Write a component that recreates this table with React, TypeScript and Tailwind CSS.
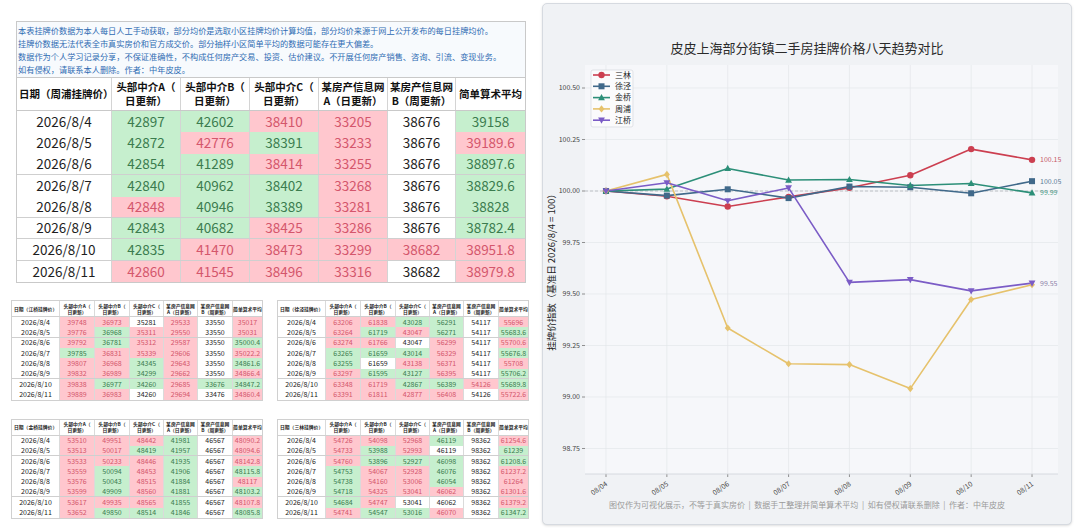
import React from 'react';

type Cell = [string, 'g' | 'r' | 'w'];
type Row = { date: string; cells: Cell[] };

const parse = (src: string): Row[] =>
  src
    .trim()
    .split('\n')
    .map((line) => {
      const [date, ...rest] = line.trim().split(/\s+/);
      return {
        date,
        cells: rest.map((t) => {
          const [v, c] = t.split(':');
          return [v, c as 'g' | 'r' | 'w'];
        }),
      };
    });

const zhoupu = parse(`
2026/8/4 42897:g 42602:g 38410:r 33205:r 38676:w 39158:g
2026/8/5 42872:g 42776:r 38391:g 33233:r 38676:w 39189.6:r
2026/8/6 42854:g 41289:g 38414:r 33255:r 38676:w 38897.6:g
2026/8/7 42840:g 40962:g 38402:g 33268:r 38676:w 38829.6:g
2026/8/8 42848:r 40946:g 38389:g 33281:r 38676:w 38828:g
2026/8/9 42843:g 40682:g 38425:r 33286:r 38676:w 38782.4:g
2026/8/10 42835:g 41470:r 38473:r 33299:r 38682:r 38951.8:r
2026/8/11 42860:r 41545:r 38496:r 33316:r 38682:w 38979.8:r
`);

const jiangqiao = parse(`
2026/8/4 39748:r 36973:r 35281:w 29533:r 33550:w 35017:r
2026/8/5 39776:r 36968:g 35311:r 29550:r 33550:w 35031:r
2026/8/6 39792:r 36781:g 35312:r 29587:r 33550:w 35000.4:g
2026/8/7 39785:g 36831:r 35339:r 29606:r 33550:w 35022.2:r
2026/8/8 39807:r 36968:r 34345:g 29643:r 33550:w 34861.6:g
2026/8/9 39832:r 36989:r 34299:g 29662:r 33550:w 34866.4:r
2026/8/10 39838:r 36977:g 34260:g 29685:r 33676:g 34847.2:g
2026/8/11 39889:r 36983:r 34260:w 29694:r 33476:w 34860.4:r
`);

const xujing = parse(`
2026/8/4 63206:r 61838:r 43028:g 56291:g 54117:w 55696:r
2026/8/5 63264:r 61719:g 43047:r 56271:g 54117:w 55683.6:g
2026/8/6 63274:r 61766:r 43047:w 56299:r 54117:w 55700.6:r
2026/8/7 63265:g 61659:g 43014:g 56329:r 54117:w 55676.8:g
2026/8/8 63255:g 61659:w 43138:r 56371:r 54117:w 55708:r
2026/8/9 63297:r 61595:g 43127:g 56395:r 54117:w 55706.2:g
2026/8/10 63348:r 61719:r 42867:g 56389:g 54126:r 55689.8:g
2026/8/11 63391:r 61811:r 42877:r 56408:r 54126:w 55722.6:r
`);

const jinqiao = parse(`
2026/8/4 53510:r 49951:r 48442:r 41981:g 46567:w 48090.2:r
2026/8/5 53513:r 50017:r 48419:g 41957:g 46567:w 48094.6:r
2026/8/6 53533:r 50233:r 48446:r 41935:g 46567:w 48142.8:r
2026/8/7 53559:r 50094:g 48453:r 41906:g 46567:w 48115.8:g
2026/8/8 53576:r 50043:g 48515:r 41884:g 46567:w 48117:r
2026/8/9 53599:r 49909:g 48560:r 41881:g 46567:w 48103.2:g
2026/8/10 53617:r 49935:r 48565:r 41855:g 46567:w 48107.8:r
2026/8/11 53652:r 49850:g 48514:g 41846:g 46567:w 48085.8:g
`);

const sanlin = parse(`
2026/8/4 54726:r 54098:r 52968:r 46119:g 98362:w 61254.6:r
2026/8/5 54733:r 53988:g 52993:r 46119:w 98362:w 61239:g
2026/8/6 54760:r 53896:g 52927:g 46098:g 98362:w 61208.6:g
2026/8/7 54753:g 54067:r 52928:r 46076:g 98362:w 61237.2:r
2026/8/8 54738:g 54160:r 53006:r 46054:g 98362:w 61264:r
2026/8/9 54718:g 54325:r 53041:r 46062:r 98362:w 61301.6:r
2026/8/10 54684:g 54747:r 53041:w 46062:w 98362:w 61379.2:r
2026/8/11 54741:r 54547:g 53016:g 46070:r 98362:w 61347.2:g
`);

const tone = (c: string) =>
  c === 'g'
    ? 'bg-[#c6efce] text-[#3b7c4e]'
    : c === 'r'
    ? 'bg-[#ffc7ce] text-[#d4566c]'
    : 'bg-white text-[#1e1e1e]';

const headers: [string, string][] = [
  ['头部中介A（', '日更新）'],
  ['头部中介B（', '日更新）'],
  ['头部中介C（', '日更新）'],
  ['某房产信息网', 'A（日更新）'],
  ['某房产信息网', 'B（周更新）'],
];

const font = { fontFamily: '"Noto Sans CJK SC", "Noto Sans", sans-serif' };

const MainTable = () => {
  const lined = [2, 4, 5, 6];
  return (
    <div className="w-[510px] border border-[#c9c9c9]">
      <div className="bg-[#f7fafd] pl-[1px] pt-[2px] pb-[1px] text-[8.2px] leading-[13px] text-[#2f6cb3] whitespace-nowrap overflow-hidden border-b border-[#c9c9c9]">
        <p>本表挂牌价数据为本人每日人工手动获取，部分均价是选取小区挂牌均价计算均值，部分均价来源于网上公开发布的每日挂牌均价。</p>
        <p>挂牌价数据无法代表全市真实房价和官方成交价。部分抽样小区简单平均的数据可能存在更大偏差。</p>
        <p>数据作为个人学习记录分享，不保证准确性，不构成任何房产交易、投资、估价建议。不开展任何房产销售、咨询、引流、变现业务。</p>
        <p>如有侵权，请联系本人删除。作者：中年皮皮。</p>
      </div>
      <div className="grid grid-cols-[95px_69px_69px_69px_69px_68px_69px] h-[33px] border-b border-[#c9c9c9] text-[10.5px] font-bold leading-[14px] text-[#111]">
        <div className="flex items-center pl-[2px] border-r border-[#d4d4d4]">日期（周浦挂牌价）</div>
        {headers.map(([a, b], i) => (
          <div key={i} className="flex flex-col items-center justify-center border-r border-[#d4d4d4]">
            <span>{a}</span>
            <span>{b}</span>
          </div>
        ))}
        <div className="flex items-center justify-center">简单算术平均</div>
      </div>
      {zhoupu.map((r, i) => (
        <div
          key={r.date}
          className={`grid grid-cols-[95px_69px_69px_69px_69px_68px_69px] h-[21.4px] text-[13.5px] leading-none ${
            lined.includes(i) ? 'border-b border-[#cfcfcf]' : ''
          }`}
        >
          <div className="flex items-center justify-center bg-white text-[#1e1e1e] border-r border-[#d4d4d4]">{r.date}</div>
          {r.cells.map(([v, c], j) => (
            <div
              key={j}
              className={`flex items-center justify-center ${tone(c)} ${j < 5 ? 'border-r border-[#d4d4d4]' : ''}`}
            >
              {v}
            </div>
          ))}
        </div>
      ))}
    </div>
  );
};

const MiniTable = ({ name, rows }: { name: string; rows: Row[] }) => (
  <div className="w-[252px] border border-[#d0d0d0] bg-white">
    <div className="grid grid-cols-[48px_35px_35px_34px_34px_35px_29px] h-[16px] border-b border-[#d0d0d0] text-[4.8px] font-bold leading-[6px] text-[#222] whitespace-nowrap">
      <div className="flex items-center pl-[2px] border-r border-[#dadada]">日期（{name}挂牌价）</div>
      {headers.map(([a, b], i) => (
        <div key={i} className="flex flex-col items-center justify-center border-r border-[#dadada]">
          <span>{a}</span>
          <span>{b}</span>
        </div>
      ))}
      <div className="flex items-center justify-center">简单算术平均</div>
    </div>
    {rows.map((r, i) => (
      <div
        key={r.date}
        className={`grid grid-cols-[48px_35px_35px_34px_34px_35px_29px] h-[10.3px] text-[7px] leading-none ${
          i === 1 || i === 5 ? 'border-b border-[#cfcfcf]' : ''
        }`}
      >
        <div className="flex items-center justify-center text-[#222] border-r border-[#dadada]">{r.date}</div>
        {r.cells.map(([v, c], j) => (
          <div key={j} className={`flex items-center justify-center ${tone(c)} ${j < 5 ? 'border-r border-[#dadada]' : ''}`}>
            {v}
          </div>
        ))}
      </div>
    ))}
  </div>
);

const avg = (rows: Row[]) => rows.map((r) => parseFloat(r.cells[5][0]));
const idx = (rows: Row[]) => {
  const a = avg(rows);
  return a.map((v) => (v / a[0]) * 100);
};

type Series = { name: string; color: string; label: string; marker: 'o' | 's' | '^' | 'd' | 'v'; data: number[] };

const series: Series[] = [
  { name: '三林', color: '#cc3f50', label: '#c65a68', marker: 'o', data: idx(sanlin) },
  { name: '徐泾', color: '#40698a', label: '#5a7b95', marker: 's', data: idx(xujing) },
  { name: '金桥', color: '#2c8f78', label: '#4d9c88', marker: '^', data: idx(jinqiao) },
  { name: '周浦', color: '#e6c26c', label: '#c9b07a', marker: 'd', data: idx(zhoupu) },
  { name: '江桥', color: '#7b5cc6', label: '#8d82a8', marker: 'v', data: idx(jiangqiao) },
];

const X = (i: number) => 63 + i * 60.86;
const Y = (v: number) => 133 - (v - 100) * 206;

const Marker = ({ kind, x, y, color }: { kind: Series['marker']; x: number; y: number; color: string }) => {
  if (kind === 'o') return <circle cx={x} cy={y} r={3.2} fill={color} />;
  if (kind === 's') return <rect x={x - 3} y={y - 3} width={6} height={6} fill={color} />;
  if (kind === '^') return <polygon points={`${x},${y - 3.6} ${x - 3.4},${y + 2.6} ${x + 3.4},${y + 2.6}`} fill={color} />;
  if (kind === 'v') return <polygon points={`${x},${y + 3.6} ${x - 3.4},${y - 2.6} ${x + 3.4},${y - 2.6}`} fill={color} />;
  return <polygon points={`${x},${y - 3.6} ${x + 3},${y} ${x},${y + 3.6} ${x - 3},${y}`} fill={color} />;
};

const yTicks = [100.5, 100.25, 100, 99.75, 99.5, 99.25, 99, 98.75];
const dates = ['08/04', '08/05', '08/06', '08/07', '08/08', '08/09', '08/10', '08/11'];

const Chart = () => (
  <svg width={528} height={440} viewBox="0 0 528 440" style={font}>
    <rect x={42} y={7} width={473} height={409} fill="#f6f7fa" />
    {yTicks.map((t) => (
      <g key={t}>
        <line x1={42} x2={515} y1={Y(t)} y2={Y(t)} stroke="#e4e6ea" strokeWidth={0.7} />
        <line x1={39} x2={42} y1={Y(t)} y2={Y(t)} stroke="#666" strokeWidth={0.7} />
        <text x={37} y={Y(t) + 2.4} fontSize={7} textAnchor="end" fill="#444">
          {t.toFixed(2)}
        </text>
      </g>
    ))}
    {dates.map((d, i) => (
      <g key={d}>
        <line x1={X(i)} x2={X(i)} y1={7} y2={416} stroke="#e4e6ea" strokeWidth={0.7} />
        <line x1={X(i)} x2={X(i)} y1={416} y2={419} stroke="#666" strokeWidth={0.7} />
        <text
          x={X(i) + 2}
          y={427}
          fontSize={7}
          textAnchor="end"
          fill="#444"
          transform={`rotate(-35 ${X(i) + 2} 427)`}
        >
          {d}
        </text>
      </g>
    ))}
    <line x1={42} x2={515} y1={416} y2={416} stroke="#cfd3d9" strokeWidth={0.8} />
    <line x1={42} x2={515} y1={Y(100)} y2={Y(100)} stroke="#a9adb3" strokeWidth={0.7} strokeDasharray="3 2" />
    <text x={12} y={212} fontSize={9.5} textAnchor="middle" fill="#222" transform="rotate(-90 12 212)">
      挂牌价指数（基准日 2026/8/4 = 100）
    </text>
    {series.map((s) => (
      <polyline
        key={s.name}
        points={s.data.map((v, i) => `${X(i)},${Y(v)}`).join(' ')}
        fill="none"
        stroke={s.color}
        strokeWidth={1.6}
        strokeLinejoin="round"
      />
    ))}
    {series.map((s) =>
      s.data.map((v, i) => <Marker key={s.name + i} kind={s.marker} x={X(i)} y={Y(v)} color={s.color} />)
    )}
    {series
      .filter((s) => s.name !== '周浦')
      .map((s) => (
        <text key={s.name} x={497} y={Y(s.data[7]) + 2.5} fontSize={7} fill={s.label}>
          {s.data[7].toFixed(2)}
        </text>
      ))}
    <rect x={48} y={12} width={42} height={57} rx={2} fill="#fbfbfc" stroke="#d6d9de" strokeWidth={0.7} />
    {series.map((s, i) => {
      const y = 17 + i * 11.3;
      return (
        <g key={s.name}>
          <line x1={50} x2={67} y1={y} y2={y} stroke={s.color} strokeWidth={1.6} />
          <Marker kind={s.marker} x={58.5} y={y} color={s.color} />
          <text x={72} y={y + 2.8} fontSize={8} fill="#222">
            {s.name}
          </text>
        </g>
      );
    })}
  </svg>
);

export default function App() {
  return (
    <div className="w-[1080px] h-[528px] bg-white flex overflow-hidden" style={font}>
      <div className="w-[540px] shrink-0 pt-[21px]">
        <div className="pl-[16px]">
          <MainTable />
        </div>
        <div className="grid grid-cols-[252px_252px] gap-x-[14px] gap-y-[18px] pl-[11px] mt-[17px]">
          <MiniTable name="江桥" rows={jiangqiao} />
          <MiniTable name="徐泾" rows={xujing} />
          <MiniTable name="金桥" rows={jinqiao} />
          <MiniTable name="三林" rows={sanlin} />
        </div>
      </div>
      <div className="ml-[2px] mt-[3px] w-[530px] h-[522px] border border-[#d6dae0] rounded-[5px] bg-[#f0f2f5] shadow-sm flex flex-col items-center">
        <div className="pt-[36px] h-[52px] text-[13px] leading-[16px] text-[#2a2a2a]">皮皮上海部分街镇二手房挂牌价格八天趋势对比</div>
        <div className="mt-[2px] w-[528px]">
          <Chart />
        </div>
        <div className="mt-[2px] text-[8px] leading-[10px] text-[#9a9a9a] whitespace-pre">
          {'图仅作为可视化展示，不等于真实房价  |  数据手工整理并简单算术平均  |  如有侵权请联系删除  |  作者：中年皮皮'}
        </div>
      </div>
    </div>
  );
}
